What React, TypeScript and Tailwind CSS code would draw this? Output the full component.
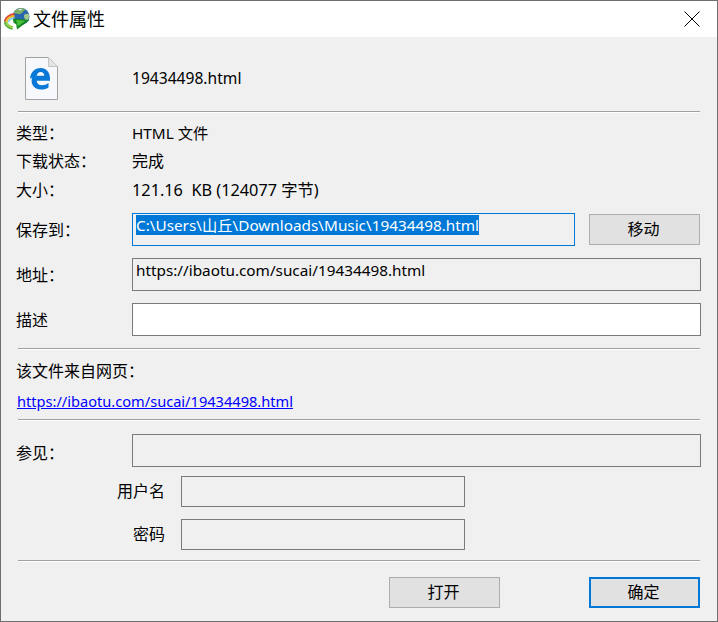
import React from 'react';

const font = { fontFamily: '"Noto Sans", "Noto Sans CJK SC", sans-serif' };

function Divider({ className = '' }: { className?: string }) {
  return <div className={`h-px ml-[17px] mr-[17px] bg-[#a0a0a0] border-b border-white box-content ${className}`} />;
}

function Field({ className = '', children }: { className?: string; children?: React.ReactNode }) {
  return <div className={`border border-[#7a7a7a] text-[15.300px] leading-[20px] px-[3px] ${className}`}>{children}</div>;
}

function DialogButton({ label, primary }: { label: string; primary?: boolean }) {
  return (
    <button
      className={`w-[111px] h-[31px] bg-[#e1e1e1] text-[16px] text-black flex items-center justify-center pr-[2px] ${
        primary ? 'border-2 border-[#0078d7]' : 'border border-[#adadad]'
      }`}
    >
      {label}
    </button>
  );
}

function IdmLogo() {
  return (
    <svg width="26" height="22" viewBox="0 0 26 22" fill="none" className="shrink-0">
      <circle cx="17" cy="8.500" r="8.500" fill="#2a66ad" />
      <path d="M10 4c2-3 6-4.500 9-3.800 2.500.6 2.500 2.300 .3 3-1 2-3 3.300-5 2.800-2-.2-4.300-.1-4.300-2z" fill="#7fae66" />
      <path d="M20 7c2-1.500 4-1.500 5.300-.3.300 2.300-.8 5-2.800 6.500-1.500-1.500-2.800-4-2.500-6.200z" fill="#a5c68a" />
      <path d="M14 1.500c1.500-.6 3-.6 4 0l-1.500 1.300z" fill="#d8e6ef" />
      <path d="M10.500 6C5.500 6.500 1 9.500.8 13.500" stroke="#dc4a3a" strokeWidth="1.800" />
      <path d="M10.500 8C6.500 8.500 2.800 10.500 2.500 14" stroke="#f2b61c" strokeWidth="1.800" />
      <path d="M10.500 10C7.500 10.300 4.500 12 4.300 14.500" stroke="#8fd0e8" strokeWidth="1.800" />
      <path d="M.8 13.500C1 17 4 20 8.500 20.800" stroke="#4fae34" strokeWidth="1.800" />
      <path d="M2.500 14C3 16.500 5.500 18.500 9 19" stroke="#9bcf45" strokeWidth="1.800" />
      <path d="M9 10.500l16.500 1.500-12.500 9.500-.8-5.200-2.700-1.500z" fill="#158a22" />
      <path d="M12 12l9 .8-7 5.400z" fill="#4cc13a" />
    </svg>
  );
}

function HtmlFileIcon() {
  return (
    <svg width="33" height="43" viewBox="0 0 33 43" className="shrink-0">
      <path d="M.5.5h23l9 9v33H.5z" fill="#f7f8fb" stroke="#a3a3a3" />
      <path d="M23.5.5v9h9z" fill="#e4e4e4" stroke="#c4c4c4" />
      <path
        d="M5 21.500C5.800 15 10 11 15.500 11 21.500 11 25 15.200 25 21.500v2.300H11.700c.3 3 2.300 4.500 5.300 4.500 2.300 0 4.500-.7 6.500-2.200v4.300c-2 1.400-4.500 2-7.300 2-3.700 0-6.700-1.300-8.300-4-1.500-2.500-1.700-5.300-.7-8 1-2.300 2.600-4 4.800-5.200-1.300 1.300-2 2.700-2.300 4.300l2 .2c-2-.2-3.700-.2-5.700 1.700zm6.800-2.700h7.500c-.1-2.500-1.600-3.900-3.600-3.900-2.100 0-3.600 1.600-3.900 3.900z"
        fill="#0a78d7"
      />
    </svg>
  );
}

export default function App() {
  return (
    <div
      className="w-[718px] h-[622px] bg-[#f0f0f0] border border-[#6f6f6f] text-[16px] leading-[20px] text-black overflow-hidden flex flex-col"
      style={font}
    >
      <div className="h-[36px] bg-white flex items-center pl-[3px] pr-[17px] shrink-0">
        <IdmLogo />
        <span className="ml-[3px] text-[18px]">文件属性</span>
        <svg width="16" height="16" viewBox="0 0 16 16" className="ml-auto" stroke="#000" fill="none">
          <path d="M.5.5l15 15M15.500.5l-15 15" />
        </svg>
      </div>

      <div className="flex items-center h-[74px] shrink-0 pl-[24px] pt-[8px]">
        <HtmlFileIcon />
        <span className="ml-[74px] text-[15.600px]">19434498.html</span>
      </div>
      <Divider />

      <div className="pl-[15px] pt-[10px] flex flex-col gap-[8.300px]">
        <div className="flex"><span className="w-[116px]">类型：</span><span className="text-[15.300px]">HTML 文件</span></div>
        <div className="flex"><span className="w-[116px]">下载状态：</span><span>完成</span></div>
        <div className="flex"><span className="w-[116px]">大小：</span><span className="text-[16.300px]">121.16&nbsp; KB (124077 字节)</span></div>
      </div>

      <div className="flex items-center pl-[15px] mt-[13px]">
        <span className="w-[116px] pt-[2px]">保存到：</span>
        <div className="w-[443px] h-[33px] border border-[#0078d7] pl-[3px] pt-[1px] text-[15.300px] leading-[20px]">
          <span className="bg-[#0078d7] text-white">C:\Users\山丘\Downloads\Music\19434498.html</span>
        </div>
        <div className="ml-[14px]"><DialogButton label="移动" /></div>
      </div>

      <div className="flex items-center pl-[15px] mt-[12px]">
        <span className="w-[116px] pt-[2px]">地址：</span>
        <Field className="w-[569px] h-[33px] pt-[1px]">https://ibaotu.com/sucai/19434498.html</Field>
      </div>

      <div className="flex items-center pl-[15px] mt-[12px]">
        <span className="w-[116px] pt-[2px]">描述</span>
        <Field className="w-[569px] h-[33px] bg-white" />
      </div>

      <Divider className="mt-[12px]" />

      <div className="pl-[15px] mt-[11px]">该文件来自网页：</div>
      <div className="pl-[16px] mt-[10px]">
        <a className="text-[#0000ff] underline text-[14.600px]">https://ibaotu.com/sucai/19434498.html</a>
      </div>

      <Divider className="mt-[8px]" />

      <div className="flex items-center pl-[15px] mt-[13px]">
        <span className="w-[116px] pt-[6px]">参见：</span>
        <Field className="w-[569px] h-[33px]" />
      </div>

      <div className="flex items-center mt-[9px]">
        <span className="w-[180px] text-right pr-[16px]">用户名</span>
        <Field className="w-[284px] h-[31px]" />
      </div>
      <div className="flex items-center mt-[12px]">
        <span className="w-[180px] text-right pr-[16px]">密码</span>
        <Field className="w-[284px] h-[31px]" />
      </div>

      <Divider className="mt-[10px]" />

      <div className="flex gap-[89px] pl-[388px] mt-[15px]">
        <DialogButton label="打开" />
        <DialogButton label="确定" primary />
      </div>
    </div>
  );
}
